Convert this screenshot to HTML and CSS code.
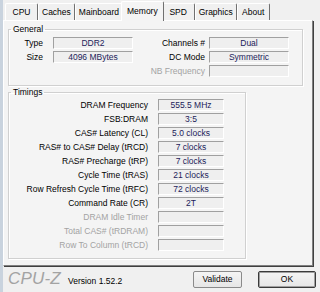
FILE: index.html
```html
<!DOCTYPE html>
<html lang="en">
<head>
    <meta charset="UTF-8">
    <title>CPU-Z Memory</title>
    <link rel="stylesheet" href="styles.css">
</head>
<body>
    <div class="window">
        <div class="tabs">
            <span class="tab">CPU</span>
            <span class="tab">Caches</span>
            <span class="tab">Mainboard</span>
            <span class="tab active">Memory</span>
            <span class="tab">SPD</span>
            <span class="tab">Graphics</span>
            <span class="tab">About</span>
        </div>

        <div class="panel">
            <fieldset class="group general">
                <legend>General</legend>
                <div class="general-grid">
                    <span class="lbl">Type</span>
                    <span class="field">DDR2</span>
                    <span class="lbl">Channels #</span>
                    <span class="field">Dual</span>

                    <span class="lbl">Size</span>
                    <span class="field">4096 MBytes</span>
                    <span class="lbl">DC Mode</span>
                    <span class="field">Symmetric</span>

                    <span></span>
                    <span></span>
                    <span class="lbl off">NB Frequency</span>
                    <span class="field"></span>
                </div>
            </fieldset>

            <fieldset class="group timings">
                <legend>Timings</legend>
                <div class="timing-grid">
                    <span class="lbl">DRAM Frequency</span><span class="field">555.5 MHz</span>
                    <span class="lbl">FSB:DRAM</span><span class="field">3:5</span>
                    <span class="lbl">CAS# Latency (CL)</span><span class="field">5.0 clocks</span>
                    <span class="lbl">RAS# to CAS# Delay (tRCD)</span><span class="field">7 clocks</span>
                    <span class="lbl">RAS# Precharge (tRP)</span><span class="field">7 clocks</span>
                    <span class="lbl">Cycle Time (tRAS)</span><span class="field">21 clocks</span>
                    <span class="lbl">Row Refresh Cycle Time (tRFC)</span><span class="field">72 clocks</span>
                    <span class="lbl">Command Rate (CR)</span><span class="field">2T</span>
                    <span class="lbl off">DRAM Idle Timer</span><span class="field"></span>
                    <span class="lbl off">Total CAS# (tRDRAM)</span><span class="field"></span>
                    <span class="lbl off">Row To Column (tRCD)</span><span class="field"></span>
                </div>
            </fieldset>
        </div>

        <div class="footer">
            <span class="brand">CPU-Z</span>
            <span class="version">Version 1.52.2</span>
            <span class="spacer"></span>
            <button class="btn">Validate</button>
            <button class="btn default">OK</button>
        </div>
    </div>
</body>
</html>
```

FILE: styles.css
```css
body { margin: 0; background: #f0f0f0; font-family: "Liberation Sans", Arial, sans-serif; font-size: 8.5px; color: #000; width: 320px; height: 292px; overflow: hidden; }
.window { height: 292px; border-left: 3px solid #c9d3de; box-sizing: border-box; }

/* tab strip */
.tabs { display: flex; align-items: flex-end; height: 20px; padding-left: 2px; }
.tab { height: 16px; line-height: 17px; padding: 0 3px; min-width: 25px; text-align: center; border-top: 1px solid #fff; border-left: 1px solid #fff; border-right: 1px solid #707070; border-radius: 2px 2px 0 0; background: #f0f0f0; }
.tab.active { height: 19px; line-height: 18px; margin: 0 -2px -1px -2px; padding: 0 5px; position: relative; z-index: 1; background: #f4f4f4; }

.panel { width: 310px; height: 246px; box-sizing: border-box; background: #f4f4f4; border-top: 1px solid #fff; border-left: 1px solid #fff; border-right: 1px solid #808080; border-bottom: 1px solid #808080; box-shadow: 1px 1px 0 #404040; padding: 4px 4px 0 4px; }

/* group boxes */
.group { margin: 0; padding: 0; border: 1px solid #d0d0d0; box-shadow: 1px 1px 0 #fff, inset 1px 1px 0 #fff; }
.group legend { padding: 0 2px; margin-left: 2px; line-height: 9px; }
.general { width: 295px; height: 61px; box-sizing: border-box; }
.timings { width: 238px; height: 171px; box-sizing: border-box; margin-top: 2px; }

.general-grid { display: grid; grid-template-columns: 34px 80px 1fr 80px; column-gap: 10px; row-gap: 2px; padding: 3px 13px 0 0; }
.timing-grid { display: grid; grid-template-columns: 1fr 66px; column-gap: 10px; row-gap: 2px; padding: 2px 21px 0 0; }
.general-grid > span { height: 12px; }
.general-grid .lbl:nth-child(3), .general-grid .lbl:nth-child(7), .general-grid .lbl:nth-child(11) { margin-right: -6px; }

.lbl { text-align: right; line-height: 12px; white-space: nowrap; }
.lbl.off { color: #a3a3a3; }
.field { height: 12px; box-sizing: border-box; line-height: 10px; text-align: center; color: #1c1c5a; background: #efefef; border: 1px solid; border-color: #a0a0a0 #fff #fff #a0a0a0; }

/* bottom bar */
.footer { display: flex; align-items: center; height: 26px; padding: 0 4px 0 5px; }
.brand { font-size: 17px; font-style: italic; color: #a3a3a3; letter-spacing: 0.2px; }
.version { margin-left: 7px; padding-top: 3px; }
.spacer { flex: 1; }
.btn { font: inherit; color: #000; height: 17px; padding: 0; background: linear-gradient(#f4f4f4, #e6e6e6); border: 1px solid #8a8a8a; border-radius: 2px; margin-left: 16px; }
.btn:first-of-type { width: 49px; }
.btn.default { width: 58px; border: 1px solid #3a3a3a; box-shadow: inset 0 0 0 1px #a0a0a0; }
```
